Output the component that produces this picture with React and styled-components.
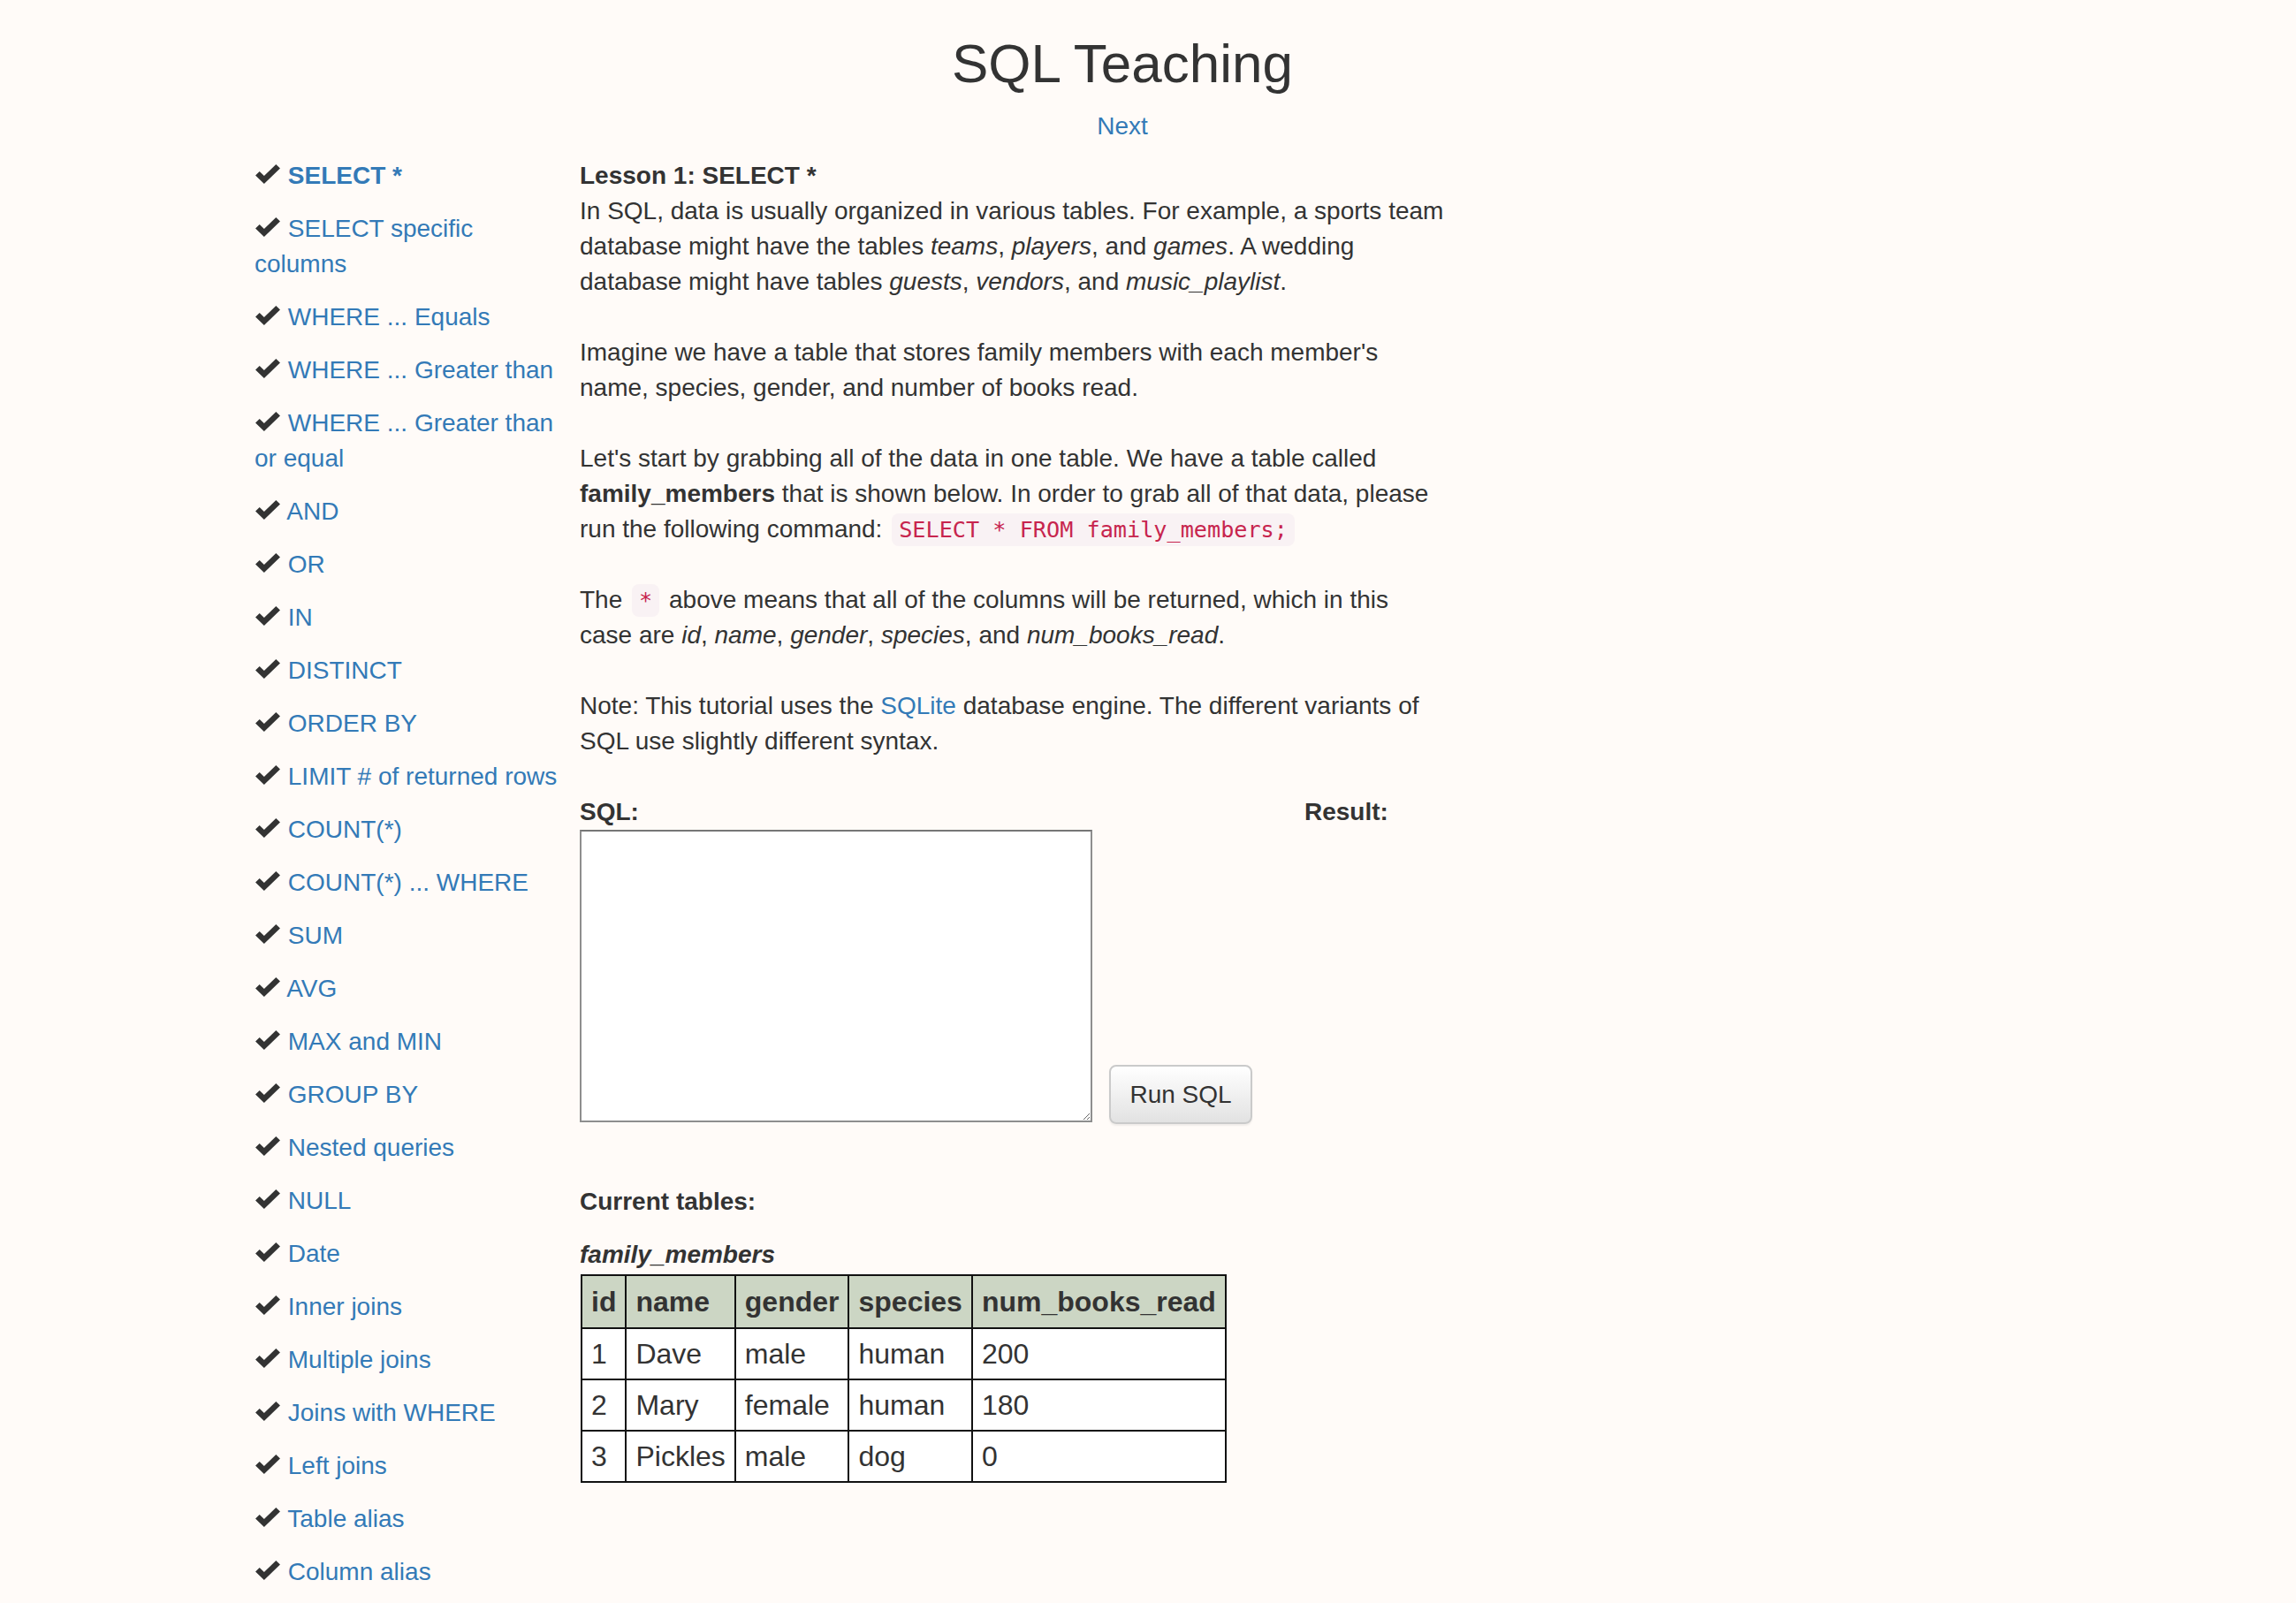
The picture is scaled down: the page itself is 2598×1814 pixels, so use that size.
import React from 'react';
import styled, { createGlobalStyle } from 'styled-components';

const GlobalStyle = createGlobalStyle`
  body {
    margin: 0;
    background: #fffbf8;
    color: #333;
    font-family: "Liberation Sans", Helvetica, Arial, sans-serif;
    font-size: 28px;
    line-height: 40px;
  }
`;

const Page = styled.div`
  width: 1964px;
  margin-left: 288px;
`;

const Header = styled.header`
  text-align: center;
`;

const Title = styled.h1`
  margin: 39px 0 0;
  font-size: 62px;
  line-height: 66px;
  font-weight: 400;
  color: #333;
`;

const NextLink = styled.a`
  display: inline-block;
  margin-top: 18px;
  color: #337ab7;
  text-decoration: none;
`;

const Body = styled.div`
  display: flex;
  gap: 18px;
  margin-top: 16px;
`;

const Sidebar = styled.ul`
  width: 350px;
  flex: none;
  margin: 0;
  padding: 0;
  list-style: none;
`;

const LessonItem = styled.li`
  margin-bottom: 20px;
`;

const Check = styled.svg`
  width: 30px;
  height: 22px;
  vertical-align: baseline;
  fill: #333;
`;

const LessonLink = styled.a`
  color: #337ab7;
  text-decoration: none;
  font-weight: ${(p) => (p.$active ? 700 : 400)};
`;

const Main = styled.main`
  width: 979.5px;
  flex: none;
`;

const LessonTitle = styled.div`
  font-weight: 700;
`;

const Para = styled.p`
  margin: 0 0 40px;
`;

const Code = styled.code`
  margin: 0 3px;
  padding: 4px 8px;
  border-radius: 8px;
  background: #f9f2f4;
  color: #c7254e;
  font-family: "DejaVu Sans Mono", "Liberation Mono", monospace;
  font-size: 25.2px;
  line-height: 1;
`;

const TextLink = styled.a`
  color: #337ab7;
  text-decoration: none;
`;

const Workspace = styled.div`
  display: grid;
  grid-template-columns: 820px 1fr;
  width: 1200px;
`;

const Label = styled.div`
  font-weight: 700;
`;

const EditorRow = styled.div`
  display: flex;
  align-items: flex-end;
  gap: 19px;
`;

const Editor = styled.textarea`
  display: block;
  box-sizing: border-box;
  width: 580px;
  height: 331px;
  margin: 0;
  border: 2px solid #8e8e8e;
  border-top-color: #767676;
  background: #fff;
  font-family: "DejaVu Sans Mono", monospace;
  font-size: 24px;
`;

const RunButton = styled.button`
  box-sizing: border-box;
  width: 162px;
  height: 67px;
  margin-bottom: -2px;
  border: 2px solid #cacaca;
  border-radius: 8px;
  background: linear-gradient(#ffffff, #e2e2e2);
  box-shadow: 0 2px 2px rgba(0, 0, 0, 0.06);
  color: #333;
  font-family: "Liberation Sans", Helvetica, Arial, sans-serif;
  font-size: 28px;
  line-height: 40px;
  padding: 0;
`;

const TablesSection = styled.section`
  margin-top: 70px;
`;

const TableName = styled.div`
  margin-top: 20px;
  font-weight: 700;
  font-style: italic;
`;

const DataTable = styled.table`
  margin: 2px 0 0 1px;
  border-collapse: collapse;
  font-size: 32px;
  line-height: 40px;
`;

const Th = styled.th`
  padding: 9px 10px;
  border: 2px solid #111;
  background: #ccd6c4;
  text-align: left;
  font-weight: 700;
`;

const Td = styled.td`
  padding: 8px 10px;
  border: 2px solid #111;
  background: #fff;
`;

const lessons = [
  'SELECT *',
  'SELECT specific columns',
  'WHERE ... Equals',
  'WHERE ... Greater than',
  'WHERE ... Greater than or equal',
  'AND',
  'OR',
  'IN',
  'DISTINCT',
  'ORDER BY',
  'LIMIT # of returned rows',
  'COUNT(*)',
  'COUNT(*) ... WHERE',
  'SUM',
  'AVG',
  'MAX and MIN',
  'GROUP BY',
  'Nested queries',
  'NULL',
  'Date',
  'Inner joins',
  'Multiple joins',
  'Joins with WHERE',
  'Left joins',
  'Table alias',
  'Column alias',
];

const columns = ['id', 'name', 'gender', 'species', 'num_books_read'];
const rows = [
  [1, 'Dave', 'male', 'human', 200],
  [2, 'Mary', 'female', 'human', 180],
  [3, 'Pickles', 'male', 'dog', 0],
];

function CheckIcon() {
  return (
    <Check viewBox="0 0 29 22" preserveAspectRatio="none">
      <polygon points="1,12.5 5.5,8 10.5,13 23.5,0 28,4.5 10.5,22" />
    </Check>
  );
}

export default function App() {
  return (
    <>
      <GlobalStyle />
      <Page>
        <Header>
          <Title>SQL Teaching</Title>
          <NextLink href="#">Next</NextLink>
        </Header>
        <Body>
          <Sidebar>
            {lessons.map((name, i) => (
              <LessonItem key={name}>
                <CheckIcon />{' '}
                <LessonLink href="#" $active={i === 0}>{name}</LessonLink>
              </LessonItem>
            ))}
          </Sidebar>
          <Main>
            <LessonTitle>Lesson 1: SELECT *</LessonTitle>
            <Para>
              In SQL, data is usually organized in various tables. For example, a sports team
              database might have the tables <em>teams</em>, <em>players</em>, and <em>games</em>.
              A wedding database might have tables <em>guests</em>, <em>vendors</em>, and{' '}
              <em>music_playlist</em>.
            </Para>
            <Para>
              Imagine we have a table that stores family members with each member's name, species,
              gender, and number of books read.
            </Para>
            <Para>
              Let's start by grabbing all of the data in one table. We have a table called{' '}
              <strong>family_members</strong> that is shown below. In order to grab all of that
              data, please run the following command: <Code>SELECT * FROM family_members;</Code>
            </Para>
            <Para>
              The <Code>*</Code> above means that all of the columns will be returned, which in
              this case are <em>id</em>, <em>name</em>, <em>gender</em>, <em>species</em>, and{' '}
              <em>num_books_read</em>.
            </Para>
            <Para>
              Note: This tutorial uses the <TextLink href="#">SQLite</TextLink> database engine. The
              different variants of SQL use slightly different syntax.
            </Para>

            <Workspace>
              <div>
                <Label>SQL:</Label>
                <EditorRow>
                  <Editor />
                  <RunButton type="button">Run SQL</RunButton>
                </EditorRow>
              </div>
              <div>
                <Label>Result:</Label>
              </div>
            </Workspace>

            <TablesSection>
              <Label>Current tables:</Label>
              <TableName>family_members</TableName>
              <DataTable>
                <thead>
                  <tr>
                    {columns.map((c) => (
                      <Th key={c}>{c}</Th>
                    ))}
                  </tr>
                </thead>
                <tbody>
                  {rows.map((r) => (
                    <tr key={r[0]}>
                      {r.map((v, j) => (
                        <Td key={j}>{v}</Td>
                      ))}
                    </tr>
                  ))}
                </tbody>
              </DataTable>
            </TablesSection>
          </Main>
        </Body>
      </Page>
    </>
  );
}
